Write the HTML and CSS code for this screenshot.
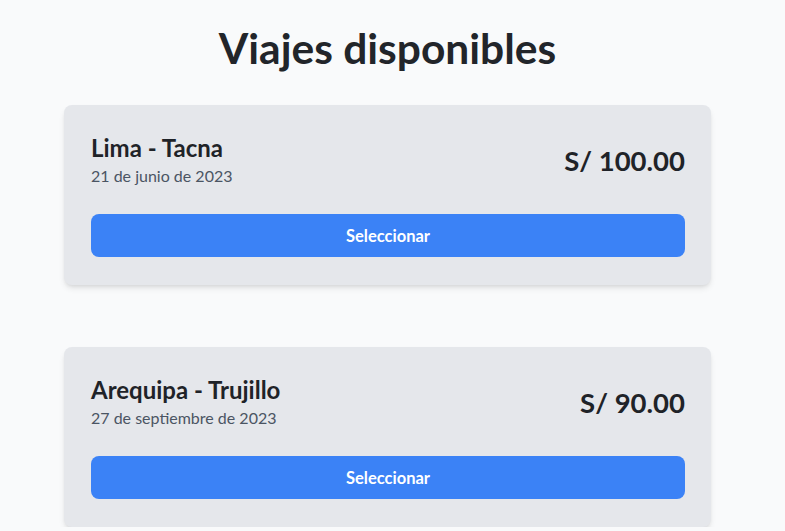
FILE: index.html
```html
<!DOCTYPE html>
<html lang="es">
<head>
<meta charset="utf-8">
<link rel="stylesheet" href="styles.css">
</head>
<body>
<main class="page">
  <h1 class="page-title">Viajes disponibles</h1>
  <div class="trip-list">
    <section class="trip-card">
      <div class="trip-head">
        <div class="trip-info">
          <h2 class="trip-route">Lima - Tacna</h2>
          <p class="trip-date">21 de junio de 2023</p>
        </div>
        <div class="trip-price">S/ 100.00</div>
      </div>
      <button class="trip-btn">Seleccionar</button>
    </section>
    <section class="trip-card">
      <div class="trip-head">
        <div class="trip-info">
          <h2 class="trip-route">Arequipa - Trujillo</h2>
          <p class="trip-date">27 de septiembre de 2023</p>
        </div>
        <div class="trip-price">S/ 90.00</div>
      </div>
      <button class="trip-btn">Seleccionar</button>
    </section>
  </div>
</main>
</body>
</html>
```
FILE: styles.css
```css
* { box-sizing: border-box; }
html, body {
  margin: 0;
  padding: 0;
  background: #f9fafb;
  font-family: "Lato", "Open Sans", sans-serif;
  color: #1f2328;
}
.page {
  width: 647px;
  margin-left: 64px;
  padding-top: 22px;
}
.page-title {
  margin: 0 0 31px;
  text-align: center;
  font-size: 42.5px;
  line-height: 52px;
  font-weight: 700;
  color: #22252a;
}
.trip-list {
  display: flex;
  flex-direction: column;
  gap: 62px;
}
.trip-card {
  background: #e5e7eb;
  border-radius: 8px;
  box-shadow: 0 4px 6px -1px rgba(0,0,0,0.1), 0 2px 4px -2px rgba(0,0,0,0.1);
  padding: 27px 26px 28px 27px;
}
.trip-head {
  display: flex;
  justify-content: space-between;
  align-items: center;
}
.trip-route {
  margin: 0;
  font-size: 24px;
  line-height: 32px;
  font-weight: 700;
  color: #1f2328;
}
.trip-date {
  margin: 0;
  font-size: 16px;
  line-height: 24px;
  color: #4b5563;
}
.trip-price {
  font-size: 27.5px;
  font-weight: 700;
  color: #1f2328;
}
.trip-btn {
  display: block;
  width: 100%;
  margin-top: 26px;
  height: 43px;
  border: none;
  border-radius: 8px;
  background: #3b82f6;
  color: #fff;
  font-family: inherit;
  font-size: 16.5px;
  font-weight: 700;
}
```
